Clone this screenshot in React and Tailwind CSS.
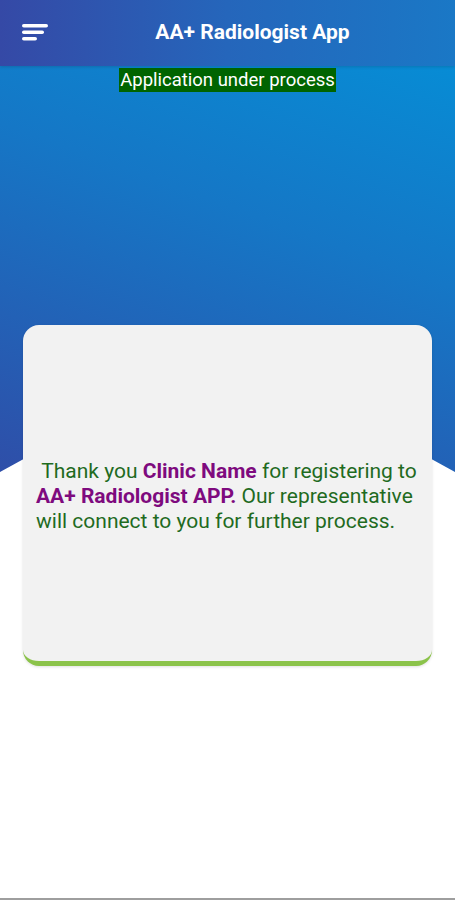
import React from "react";

const MenuIcon = () => (
  <svg width="28" height="18" viewBox="0 0 28 18" className="block">
    <rect x="0" y="0" width="26" height="3.5" rx="1.75" fill="white" />
    <rect x="0" y="6.5" width="22" height="3.5" rx="1.75" fill="white" />
    <rect x="0" y="13" width="15" height="3.5" rx="1.75" fill="white" />
  </svg>
);

export default function App() {
  return (
    <div className="relative w-full h-[900px] bg-white overflow-hidden font-['Roboto',sans-serif] border-b-2 border-[#9e9e9e]">
      {/* blue backdrop with peaked bottom */}
      <div className="absolute inset-x-0 top-0 h-[475px] bg-[linear-gradient(200deg,#0392d9_0%,#1577c6_45%,#2f4ea8_100%)] [clip-path:polygon(0_0,100%_0,100%_472px,50%_347px,0_472px)]" />

      <div className="relative flex flex-col">
        {/* header */}
        <header className="h-[66px] flex items-center bg-[linear-gradient(90deg,#3549a6_0%,#2566bb_50%,#1a78c6_100%)] shadow-[0_1px_3px_rgba(0,0,0,0.15)]">
          <button className="pl-[22px] flex items-center">
            <MenuIcon />
          </button>
          <h1 className="flex-1 text-center text-white font-bold text-[21px]">
            AA+ Radiologist App
          </h1>
        </header>

        <div className="flex justify-center pt-[2px]">
          <span className="bg-[#006400] text-white text-[18.5px] leading-[24px] px-[1px]">
            Application under process
          </span>
        </div>

        {/* card */}
        <div className="mx-[23px] mt-[233px] h-[341px] rounded-[16px] bg-[#f2f2f2] border-b-[5px] border-[#8bc34a] shadow-[0_1px_3px_rgba(0,0,0,0.12)] flex items-center px-[13px] pt-[6px]">
          <p className="text-[21px] leading-[25px] text-[#1f6b1f]">
            {" "}&nbsp;Thank you <span className="font-bold text-[#7e0a7e]">Clinic Name</span> for registering to{" "}
            <span className="font-bold text-[#7e0a7e]">AA+ Radiologist APP.</span> Our representative will
            connect to you for further process.
          </p>
        </div>
      </div>
    </div>
  );
}
